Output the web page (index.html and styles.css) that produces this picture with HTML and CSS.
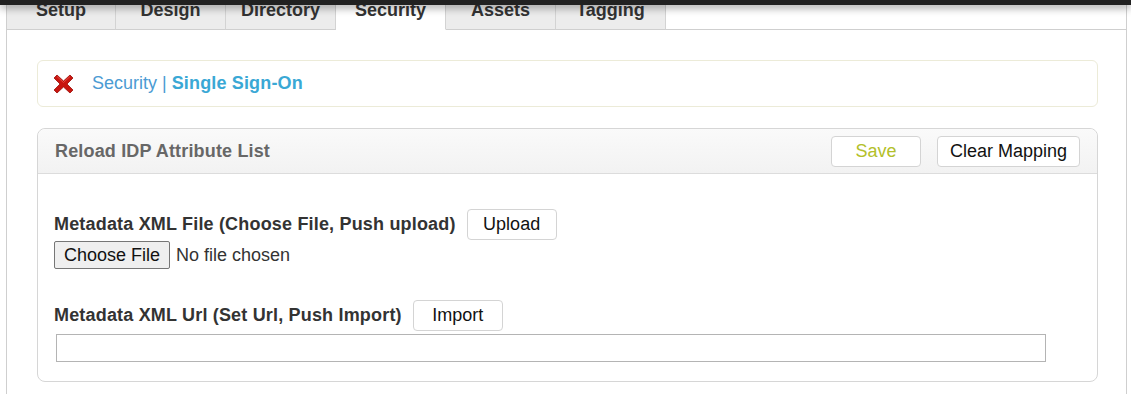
FILE: index.html
```html
<!DOCTYPE html>
<html lang="en">
<head>
  <meta charset="UTF-8">
  <title>Security - Single Sign-On</title>
  <link rel="stylesheet" href="styles.css">
</head>
<body>
<div class="topbar"></div>
<div class="page">
  <div class="tabs">
    <div class="tab">Setup</div>
    <div class="tab">Design</div>
    <div class="tab">Directory</div>
    <div class="tab active">Security</div>
    <div class="tab">Assets</div>
    <div class="tab">Tagging</div>
    <div class="tab-fill"></div>
  </div>
  <div class="content">
    <div class="crumb">
      <svg class="crumb-close" width="21" height="20" viewBox="0 0 21 20">
        <path d="M1 4 L4 1 L10.5 7 L17 1 L20 4 L14 10 L20 16 L17 19 L10.5 13 L4 19 L1 16 L7 10 Z" fill="#c8150f" stroke="#9c0d08" stroke-width="0.8"/>
        <path d="M4 2.5 L10.5 8.5 L17 2.5" fill="none" stroke="#e8463d" stroke-width="1"/>
      </svg>
      <span class="crumb-link">Security</span>
      <span class="crumb-sep">|</span>
      <strong class="crumb-current">Single Sign-On</strong>
    </div>

    <div class="panel">
      <div class="panel-head">
        <h2 class="panel-title">Reload IDP Attribute List</h2>
        <div class="actions">
          <button class="btn btn-save">Save</button>
          <button class="btn">Clear Mapping</button>
        </div>
      </div>
      <div class="panel-body">
        <div class="field">
          <label class="field-label">Metadata XML File (Choose File, Push upload)</label>
          <button class="btn">Upload</button>
        </div>
        <input class="file-input" type="file">

        <div class="field field-url">
          <label class="field-label">Metadata XML Url (Set Url, Push Import)</label>
          <button class="btn">Import</button>
        </div>
        <input class="url-input" type="text">
      </div>
    </div>
  </div>
</div>
</body>
</html>
```

FILE: styles.css
```css
body {
  margin: 0;
  font-family: "Liberation Sans", Arial, sans-serif;
  color: #333;
  background: #fff;
}

.topbar {
  position: relative;
  z-index: 2;
  height: 5px;
  background: #212121;
  box-shadow: 0 2px 9px rgba(0, 0, 0, .5);
}

.page {
  margin: -5px 0 0 6px;
  width: 1121px;
}

/* tabs */
.tabs {
  display: flex;
  height: 30px;
  border-left: 1px solid #cfcfcf;
}
.tab {
  width: 110px;
  box-sizing: border-box;
  height: 30px;
  line-height: 21px;
  text-align: center;
  font-size: 18px;
  font-weight: bold;
  color: #333;
  background: #ececec;
  border-right: 1px solid #d3d3d3;
  border-bottom: 1px solid #cfcfcf;
}
.tab:first-child {
  width: 109px;
}
.tab.active {
  background: #fff;
  border-bottom-color: #fff;
}
.tab-fill {
  flex: 1;
  border-bottom: 1px solid #cfcfcf;
  border-right: 1px solid #cfcfcf;
}

.content {
  border: 1px solid #cfcfcf;
  border-top: none;
  padding: 30px 28px 24px 30px;
}

/* breadcrumb */
.crumb {
  display: flex;
  align-items: center;
  height: 45px;
  padding-left: 15px;
  border: 1px solid #ecebd8;
  border-radius: 6px;
  font-size: 18px;
}
.crumb-close {
  margin-right: 18px;
}
.crumb-link {
  color: #4b9bd3;
}
.crumb-sep {
  color: #4b9bd3;
  margin: 0 5px;
}
.crumb-current {
  color: #3aa8d5;
  letter-spacing: .15px;
}

/* panel */
.panel {
  margin-top: 21px;
  border: 1px solid #d6d6d6;
  border-radius: 8px;
}
.panel-head {
  display: flex;
  align-items: center;
  justify-content: space-between;
  height: 44px;
  padding: 0 17px 0 17px;
  border-bottom: 1px solid #dcdcdc;
  border-radius: 8px 8px 0 0;
  background: linear-gradient(#fafafa, #f2f2f2);
}
.panel-title {
  margin: 0;
  font-size: 18px;
  color: #676767;
  letter-spacing: .16px;
}
.actions {
  display: flex;
  gap: 16px;
  margin-top: 1px;
}

.btn {
  height: 31px;
  min-width: 90px;
  padding: 0 12px;
  font-family: "Liberation Sans", Arial, sans-serif;
  font-size: 18px;
  color: #111;
  background: #fff;
  border: 1px solid #d4d4d4;
  border-radius: 4px;
}
.btn-save {
  color: #b3c02a;
}

.panel-body {
  padding: 35px 16px 19px 16px;
}
.field {
  display: flex;
  align-items: baseline;
  height: 32px;
}
.field-label {
  font-size: 18px;
  font-weight: bold;
  color: #333;
  letter-spacing: .18px;
}
.field .btn {
  margin-left: 11px;
}
.field-url {
  margin-top: 31px;
}

.file-input {
  display: block;
  height: 28px;
  font-family: "Liberation Sans", Arial, sans-serif;
  font-size: 18px;
  color: #333;
}
.file-input::file-selector-button {
  height: 28px;
  margin-right: 6px;
  padding: 0 9px;
  font-family: "Liberation Sans", Arial, sans-serif;
  font-size: 18px;
  color: #111;
  background: #efefef;
  border: 1px solid #767676;
  border-radius: 2px;
}

.url-input {
  display: block;
  box-sizing: border-box;
  width: 990px;
  height: 28px;
  margin: 2px 0 0 2px;
  border: 1px solid #b4b4b4;
}
```
